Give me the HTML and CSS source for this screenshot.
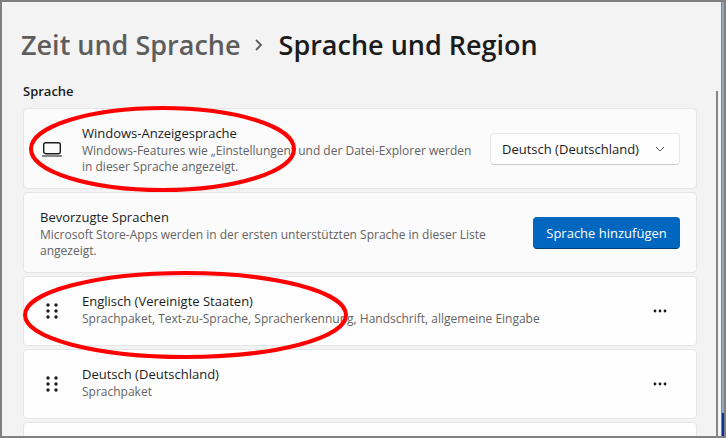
FILE: index.html
```html
<!DOCTYPE html>
<html lang="de">
<head>
  <meta charset="UTF-8" />
  <meta name="viewport" content="width=device-width, initial-scale=1.0"/>
  <title>Sprache und Region</title>
  <link rel="stylesheet" href="styles.css">
</head>
<body>
  <div class="window">
    <main class="content">
      <h1 class="breadcrumb">
        <a href="#" class="parent">Zeit und Sprache</a>
        <svg class="separator" width="8" height="12" viewBox="0 0 8 12"><path d="M1 1l5 5-5 5" fill="none" stroke="#5d5d5d" stroke-width="1.8"/></svg>
        <span>Sprache und Region</span>
      </h1>

      <h2 class="section-title">Sprache</h2>

      <div class="cards">
        <section class="card tall">
          <svg class="icon" width="20" height="20" viewBox="0 0 20 20" fill="none" stroke="#1b1b1b" stroke-width="1.4">
            <rect x="1.7" y="3.7" width="16.6" height="11" rx="2"/>
            <path d="M0 17h20" stroke="#555"/>
          </svg>
          <div class="text">
            <label class="name" for="display-language">Windows-Anzeigesprache</label>
            <p class="info">Windows-Features wie „Einstellungen“ und der Datei-Explorer werden in dieser Sprache angezeigt.</p>
          </div>
          <div class="dropdown">
            <select id="display-language">
              <option>Deutsch (Deutschland)</option>
              <option>Englisch (Vereinigte Staaten)</option>
            </select>
            <svg class="chevron" width="10" height="6" viewBox="0 0 10 6"><path d="M1 1l4 4 4-4" fill="none" stroke="#5d5d5d"/></svg>
          </div>
          <svg class="marker marker-display" width="267" height="86"><ellipse cx="133.5" cy="43" rx="131.5" ry="41"/></svg>
        </section>

        <section class="card tall">
          <div class="text">
            <h3 class="name">Bevorzugte Sprachen</h3>
            <p class="info">Microsoft Store-Apps werden in der ersten unterstützten Sprache in dieser Liste angezeigt.</p>
          </div>
          <button class="add">Sprache hinzufügen</button>
        </section>

        <section class="card language">
          <svg class="icon" width="20" height="20" viewBox="0 0 20 20" fill="#1b1b1b">
            <circle cx="6" cy="4" r="1.7"/><circle cx="14" cy="4" r="1.7"/>
            <circle cx="6" cy="10" r="1.7"/><circle cx="14" cy="10" r="1.7"/>
            <circle cx="6" cy="16" r="1.7"/><circle cx="14" cy="16" r="1.7"/>
          </svg>
          <div class="text">
            <h3 class="name">Englisch (Vereinigte Staaten)</h3>
            <p class="info">Sprachpaket, Text-zu-Sprache, Spracherkennung, Handschrift, allgemeine Eingabe</p>
          </div>
          <button class="more" aria-label="Weitere Optionen">
            <svg width="14" height="4" viewBox="0 0 14 4" fill="#1b1b1b"><circle cx="2" cy="2" r="1.4"/><circle cx="7" cy="2" r="1.4"/><circle cx="12" cy="2" r="1.4"/></svg>
          </button>
          <svg class="marker marker-english" width="325" height="88"><ellipse cx="162.5" cy="44" rx="160.5" ry="42"/></svg>
        </section>

        <section class="card language">
          <svg class="icon" width="20" height="20" viewBox="0 0 20 20" fill="#1b1b1b">
            <circle cx="6" cy="4" r="1.7"/><circle cx="14" cy="4" r="1.7"/>
            <circle cx="6" cy="10" r="1.7"/><circle cx="14" cy="10" r="1.7"/>
            <circle cx="6" cy="16" r="1.7"/><circle cx="14" cy="16" r="1.7"/>
          </svg>
          <div class="text">
            <h3 class="name">Deutsch (Deutschland)</h3>
            <p class="info">Sprachpaket</p>
          </div>
          <button class="more" aria-label="Weitere Optionen">
            <svg width="14" height="4" viewBox="0 0 14 4" fill="#1b1b1b"><circle cx="2" cy="2" r="1.4"/><circle cx="7" cy="2" r="1.4"/><circle cx="12" cy="2" r="1.4"/></svg>
          </button>
        </section>

        <section class="card language"></section>
      </div>
    </main>
    <div class="scrollbar"></div>
    <div class="desktop"></div>
  </div>
</body>
</html>
```

FILE: styles.css
```css
* {
  box-sizing: border-box;
}

body {
  margin: 0;
  font-family: 'Open Sans', 'Noto Sans', sans-serif;
  font-size: 13px;
  color: #1b1b1b;
}

h1, h2, h3, p {
  margin: 0;
}

.window {
  display: flex;
  height: 100vh;
  border: 2px solid #808080;
  background-color: #f3f3f3;
  overflow: hidden;
}

.content {
  flex: 1;
  min-width: 0;
  padding: 23px 19px 0 21px;
}

.breadcrumb {
  display: flex;
  align-items: center;
  font-size: 27px;
  font-weight: 600;
  line-height: 40px;
  margin-left: -2px;
}

.parent {
  color: #5d5d5d;
  text-decoration: none;
}

.separator {
  margin: 0 16px 0 14px;
}

.section-title {
  margin: 16px 0 7px;
  font-size: 13px;
  font-weight: 600;
  line-height: 20px;
}

.cards {
  display: flex;
  flex-direction: column;
  gap: 3px;
}

.card {
  position: relative;
  display: flex;
  align-items: center;
  min-height: 70px;
  padding: 0 16px;
  border: 1px solid #e5e5e5;
  border-radius: 4px;
  background-color: #fbfbfb;
}

.tall {
  min-height: 81px;
}

.language {
  background-color: #fefefe;
}

.icon {
  flex: none;
  margin: 0 20px 0 2px;
}

.text {
  flex: 1;
  min-width: 0;
  margin-right: 16px;
}

.language .text {
  padding-bottom: 4px;
}

.name {
  display: block;
  font-size: 13px;
  font-weight: 400;
  line-height: 20px;
}

.info {
  font-size: 12px;
  line-height: 16px;
  color: #636363;
}

.dropdown {
  position: relative;
}

.dropdown select {
  appearance: none;
  width: 190px;
  height: 32px;
  padding: 0 11px;
  border: 1px solid #e7e7e7;
  border-bottom-color: #cccccc;
  border-radius: 4px;
  background-color: #fefefe;
  font: inherit;
  color: inherit;
}

.chevron {
  position: absolute;
  top: 13px;
  right: 15px;
  pointer-events: none;
}

.add {
  width: 147px;
  height: 32px;
  padding: 0;
  border: 1px solid #0067c0;
  border-bottom-color: #003e73;
  border-radius: 4px;
  background-color: #0067c0;
  font: inherit;
  color: #fff;
}

.more {
  display: flex;
  align-items: center;
  justify-content: center;
  width: 40px;
  height: 32px;
  padding: 0;
  border: none;
  background: none;
}

/* red ellipses drawn over the cards */
.marker {
  position: absolute;
  z-index: 1;
  fill: none;
  stroke: #ff0000;
  stroke-width: 4px;
  pointer-events: none;
}

.marker-display {
  top: -3px;
  left: 5px;
}

.marker-english {
  top: -6px;
  left: -1px;
}

.scrollbar {
  width: 2px;
  margin: 89px 3px 0 0;
  background-color: #858585;
}

.desktop {
  width: 3px;
  border-left: 1px solid #73879a;
  background: linear-gradient(to top, #0a3296 23px, #8faac2 23px);
}
```
